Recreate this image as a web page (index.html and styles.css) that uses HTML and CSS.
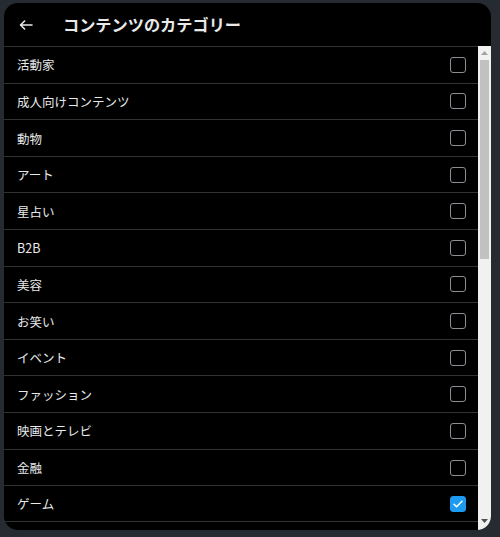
FILE: index.html
```html
<!DOCTYPE html>
<html lang="ja">
<head>
<meta charset="utf-8">
<title>コンテンツのカテゴリー</title>
<link rel="stylesheet" href="styles.css">
</head>
<body>
<div class="modal">
  <div class="header">
    <button class="back" aria-label="戻る">
      <svg width="14" height="10" viewBox="0 0 14 10"><path d="M13 5H1.6M5.6 1L1.5 5l4.1 4" fill="none" stroke="#e7e9ea" stroke-width="1.6" stroke-linecap="round" stroke-linejoin="round"/></svg>
    </button>
    <h1 class="title">コンテンツのカテゴリー</h1>
  </div>
  <div class="content">
    <ul class="list">
      <li class="row"><span>活動家</span><span class="box"></span></li>
      <li class="row"><span>成人向けコンテンツ</span><span class="box"></span></li>
      <li class="row"><span>動物</span><span class="box"></span></li>
      <li class="row"><span>アート</span><span class="box"></span></li>
      <li class="row"><span>星占い</span><span class="box"></span></li>
      <li class="row"><span>B2B</span><span class="box"></span></li>
      <li class="row"><span>美容</span><span class="box"></span></li>
      <li class="row"><span>お笑い</span><span class="box"></span></li>
      <li class="row"><span>イベント</span><span class="box"></span></li>
      <li class="row"><span>ファッション</span><span class="box"></span></li>
      <li class="row"><span>映画とテレビ</span><span class="box"></span></li>
      <li class="row"><span>金融</span><span class="box"></span></li>
      <li class="row"><span>ゲーム</span><span class="box checked"><svg width="10" height="8" viewBox="0 0 10 8"><path d="M1 4.3l2.6 2.5L9 1.2" fill="none" stroke="#fff" stroke-width="1.5" stroke-linecap="round" stroke-linejoin="round"/></svg></span></li>
    </ul>
    <div class="scrollbar" aria-hidden="true">
      <div class="sb-btn"><svg width="7" height="4" viewBox="0 0 7 4"><path d="M0 4L3.5 0 7 4z" fill="#a3a3a3"/></svg></div>
      <div class="sb-track"><div class="sb-thumb"></div></div>
      <div class="sb-btn sb-down"><svg width="7" height="4" viewBox="0 0 7 4"><path d="M0 0h7L3.5 4z" fill="#505050"/></svg></div>
    </div>
  </div>
</div>
</body>
</html>
```
FILE: styles.css
```css
* { box-sizing: border-box; }
html, body { height: 100%; }
body {
  margin: 0;
  padding: 3px 8px 7px 4px;
  background: #252b31;
  font-family: "Noto Sans CJK JP", "Noto Sans", sans-serif;
  color: #e7e9ea;
  overflow: hidden;
}
.modal {
  width: 487px;
  height: 527px;
  background: #000;
  border-radius: 14px;
  overflow: hidden;
  display: flex;
  flex-direction: column;
}
.header {
  height: 43px;
  flex: none;
  display: flex;
  align-items: center;
  padding-left: 14px;
}
.back {
  width: 16px;
  height: 16px;
  padding: 0;
  border: 0;
  background: none;
  display: flex;
  align-items: center;
  justify-content: center;
  margin-right: 29px;
  margin-top: 1px;
}
.title {
  margin: 0;
  font-size: 16.2px;
  font-weight: 700;
  line-height: 1;
}
.content {
  flex: 1;
  min-height: 0;
  display: flex;
}
.list {
  list-style: none;
  margin: 0;
  padding: 0;
  flex: 1;
  overflow: hidden;
}
.row {
  height: 36.62px;
  border-top: 1px solid #2f3336;
  border-bottom: 0;
  display: flex;
  align-items: center;
  justify-content: space-between;
  padding: 0 12px 0 13px;
  font-size: 12.5px;
}
.row:last-child {
  border-bottom: 1px solid #2f3336;
}
.box {
  width: 16px;
  height: 16px;
  border: 1.5px solid #8b9095;
  border-radius: 3px;
  display: flex;
  align-items: center;
  justify-content: center;
}
.box.checked {
  background: #1d9bf0;
  border-color: #1d9bf0;
}
.scrollbar {
  width: 13px;
  flex: none;
  background: #f1f1f1;
  display: flex;
  flex-direction: column;
}
.sb-btn {
  height: 14px;
  flex: none;
  display: flex;
  align-items: center;
  justify-content: center;
}
.sb-down {
  height: 17px;
  align-items: flex-start;
  padding-top: 6px;
}
.sb-track {
  flex: 1;
  padding: 0 2px;
}
.sb-thumb {
  height: 199px;
  background: #c1c1c1;
}
```
